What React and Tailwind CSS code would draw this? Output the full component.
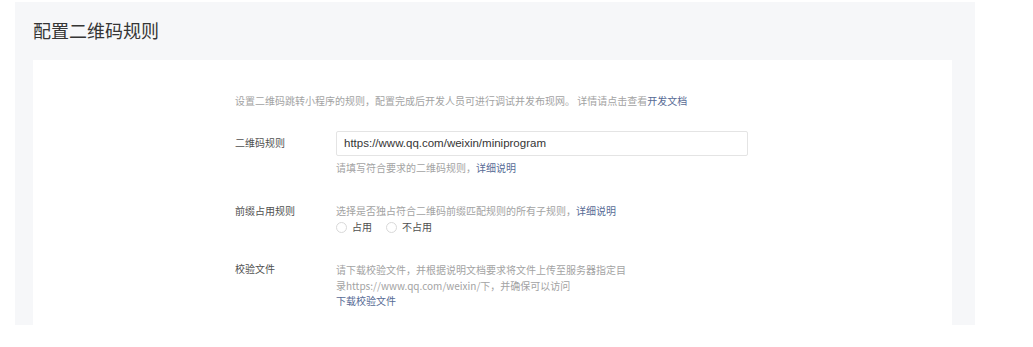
export default function App() {
  const font = { fontFamily: '"Noto Sans CJK SC", "Liberation Sans", sans-serif' };
  return (
    <div className="w-[1033px] h-[347px] bg-white" style={font}>
      <div className="ml-[15px] mt-[2px] w-[960px] h-[323px] bg-[#f6f7f9] pl-[18px] pr-[23px] overflow-hidden">
        <h1 className="pt-[16px] h-[58px] text-[18px] leading-[24px] text-[#353535] font-normal">配置二维码规则</h1>
        <div className="bg-white h-[300px] pl-[202px] pt-[34px]">
          <p className="text-[10px] leading-[14px] text-[#a3a3a3]">
            设置二维码跳转小程序的规则，配置完成后开发人员可进行调试并发布现网。 详情请点击查看<a className="text-[#576b95]">开发文档</a>
          </p>

          <div className="flex mt-[23px]">
            <div className="w-[101px] text-[10px] leading-[14px] text-[#505050] pt-[5px]">二维码规则</div>
            <div>
              <div className="w-[412px] h-[25px] border border-[#e4e4e4] rounded-[2px] px-[7px] flex items-center text-[11.5px] text-[#353535]" style={{ fontFamily: '"Liberation Sans", sans-serif' }}>
                https://www.qq.com/weixin/miniprogram
              </div>
              <p className="mt-[5px] text-[10px] leading-[14px] text-[#a3a3a3]">
                请填写符合要求的二维码规则，<a className="text-[#576b95]">详细说明</a>
              </p>
            </div>
          </div>

          <div className="flex mt-[29px]">
            <div className="w-[101px] text-[10px] leading-[14px] text-[#505050]">前缀占用规则</div>
            <div>
              <p className="text-[10px] leading-[14px] text-[#a3a3a3]">
                选择是否独占符合二维码前缀匹配规则的所有子规则，<a className="text-[#576b95]">详细说明</a>
              </p>
              <div className="flex items-center mt-[2px] text-[10px] leading-[14px] text-[#505050]">
                <span className="w-[11px] h-[11px] rounded-full border border-[#d9d9d9] mr-[5px]"></span>
                <span>占用</span>
                <span className="w-[11px] h-[11px] rounded-full border border-[#d9d9d9] ml-[14px] mr-[5px]"></span>
                <span>不占用</span>
              </div>
            </div>
          </div>

          <div className="flex mt-[28px]">
            <div className="w-[101px] text-[10px] leading-[14px] text-[#505050]">校验文件</div>
            <div className="w-[320px] text-[10px] leading-[15.5px] text-[#a3a3a3]">
              <p>请下载校验文件，并根据说明文档要求将文件上传至服务器指定目<br />录https://www.qq.com/weixin/下，并确保可以访问</p>
              <a className="block text-[#576b95]">下载校验文件</a>
            </div>
          </div>
        </div>
      </div>
    </div>
  );
}
